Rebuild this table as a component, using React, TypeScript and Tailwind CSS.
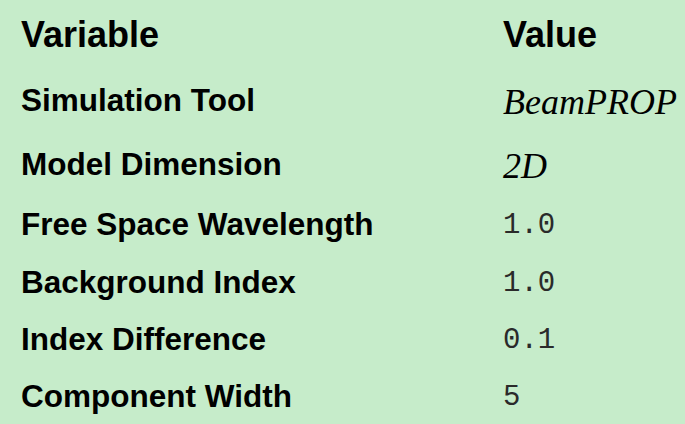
type Kind = 'serif' | 'mono'

interface Row {
  label: string
  value: string
  kind: Kind
  h: string
}

const rows: Row[] = [
  { label: 'Simulation Tool', value: 'BeamPROP', kind: 'serif', h: 'h-[65px]' },
  { label: 'Model Dimension', value: '2D', kind: 'serif', h: 'h-[62px]' },
  { label: 'Free Space Wavelength', value: '1.0', kind: 'mono', h: 'h-[59px]' },
  { label: 'Background Index', value: '1.0', kind: 'mono', h: 'h-[57px]' },
  { label: 'Index Difference', value: '0.1', kind: 'mono', h: 'h-[57px]' },
  { label: 'Component Width', value: '5', kind: 'mono', h: 'h-[56px]' },
]

function Value({ value, kind }: { value: string; kind: Kind }) {
  if (kind === 'serif') {
    return (
      <span className="mt-[5px] font-['Liberation_Serif',serif] text-[36px] italic leading-[1.15]">
        {value}
      </span>
    )
  }
  return (
    <span className="mt-[3px] font-['Liberation_Mono',monospace] text-[29px] leading-[1.15] text-[#2a2a2a]">
      {value}
    </span>
  )
}

export default function App() {
  return (
    <div className="h-[424px] w-[685px] overflow-hidden bg-[#c6ecca] pl-[21px] text-black">
      <div className="flex h-[68px] items-center font-['Liberation_Sans',Arial,sans-serif] text-[36px] font-bold leading-[1.15]">
        <span className="mt-[2px] w-[482px] shrink-0">Variable</span>
        <span className="mt-[2px]">Value</span>
      </div>
      {rows.map(r => (
        <div key={r.label} className={`flex items-center ${r.h}`}>
          <span className="w-[482px] shrink-0 font-['Liberation_Sans',Arial,sans-serif] text-[31.5px] font-bold leading-[1.15]">
            {r.label}
          </span>
          <Value value={r.value} kind={r.kind} />
        </div>
      ))}
    </div>
  )
}
